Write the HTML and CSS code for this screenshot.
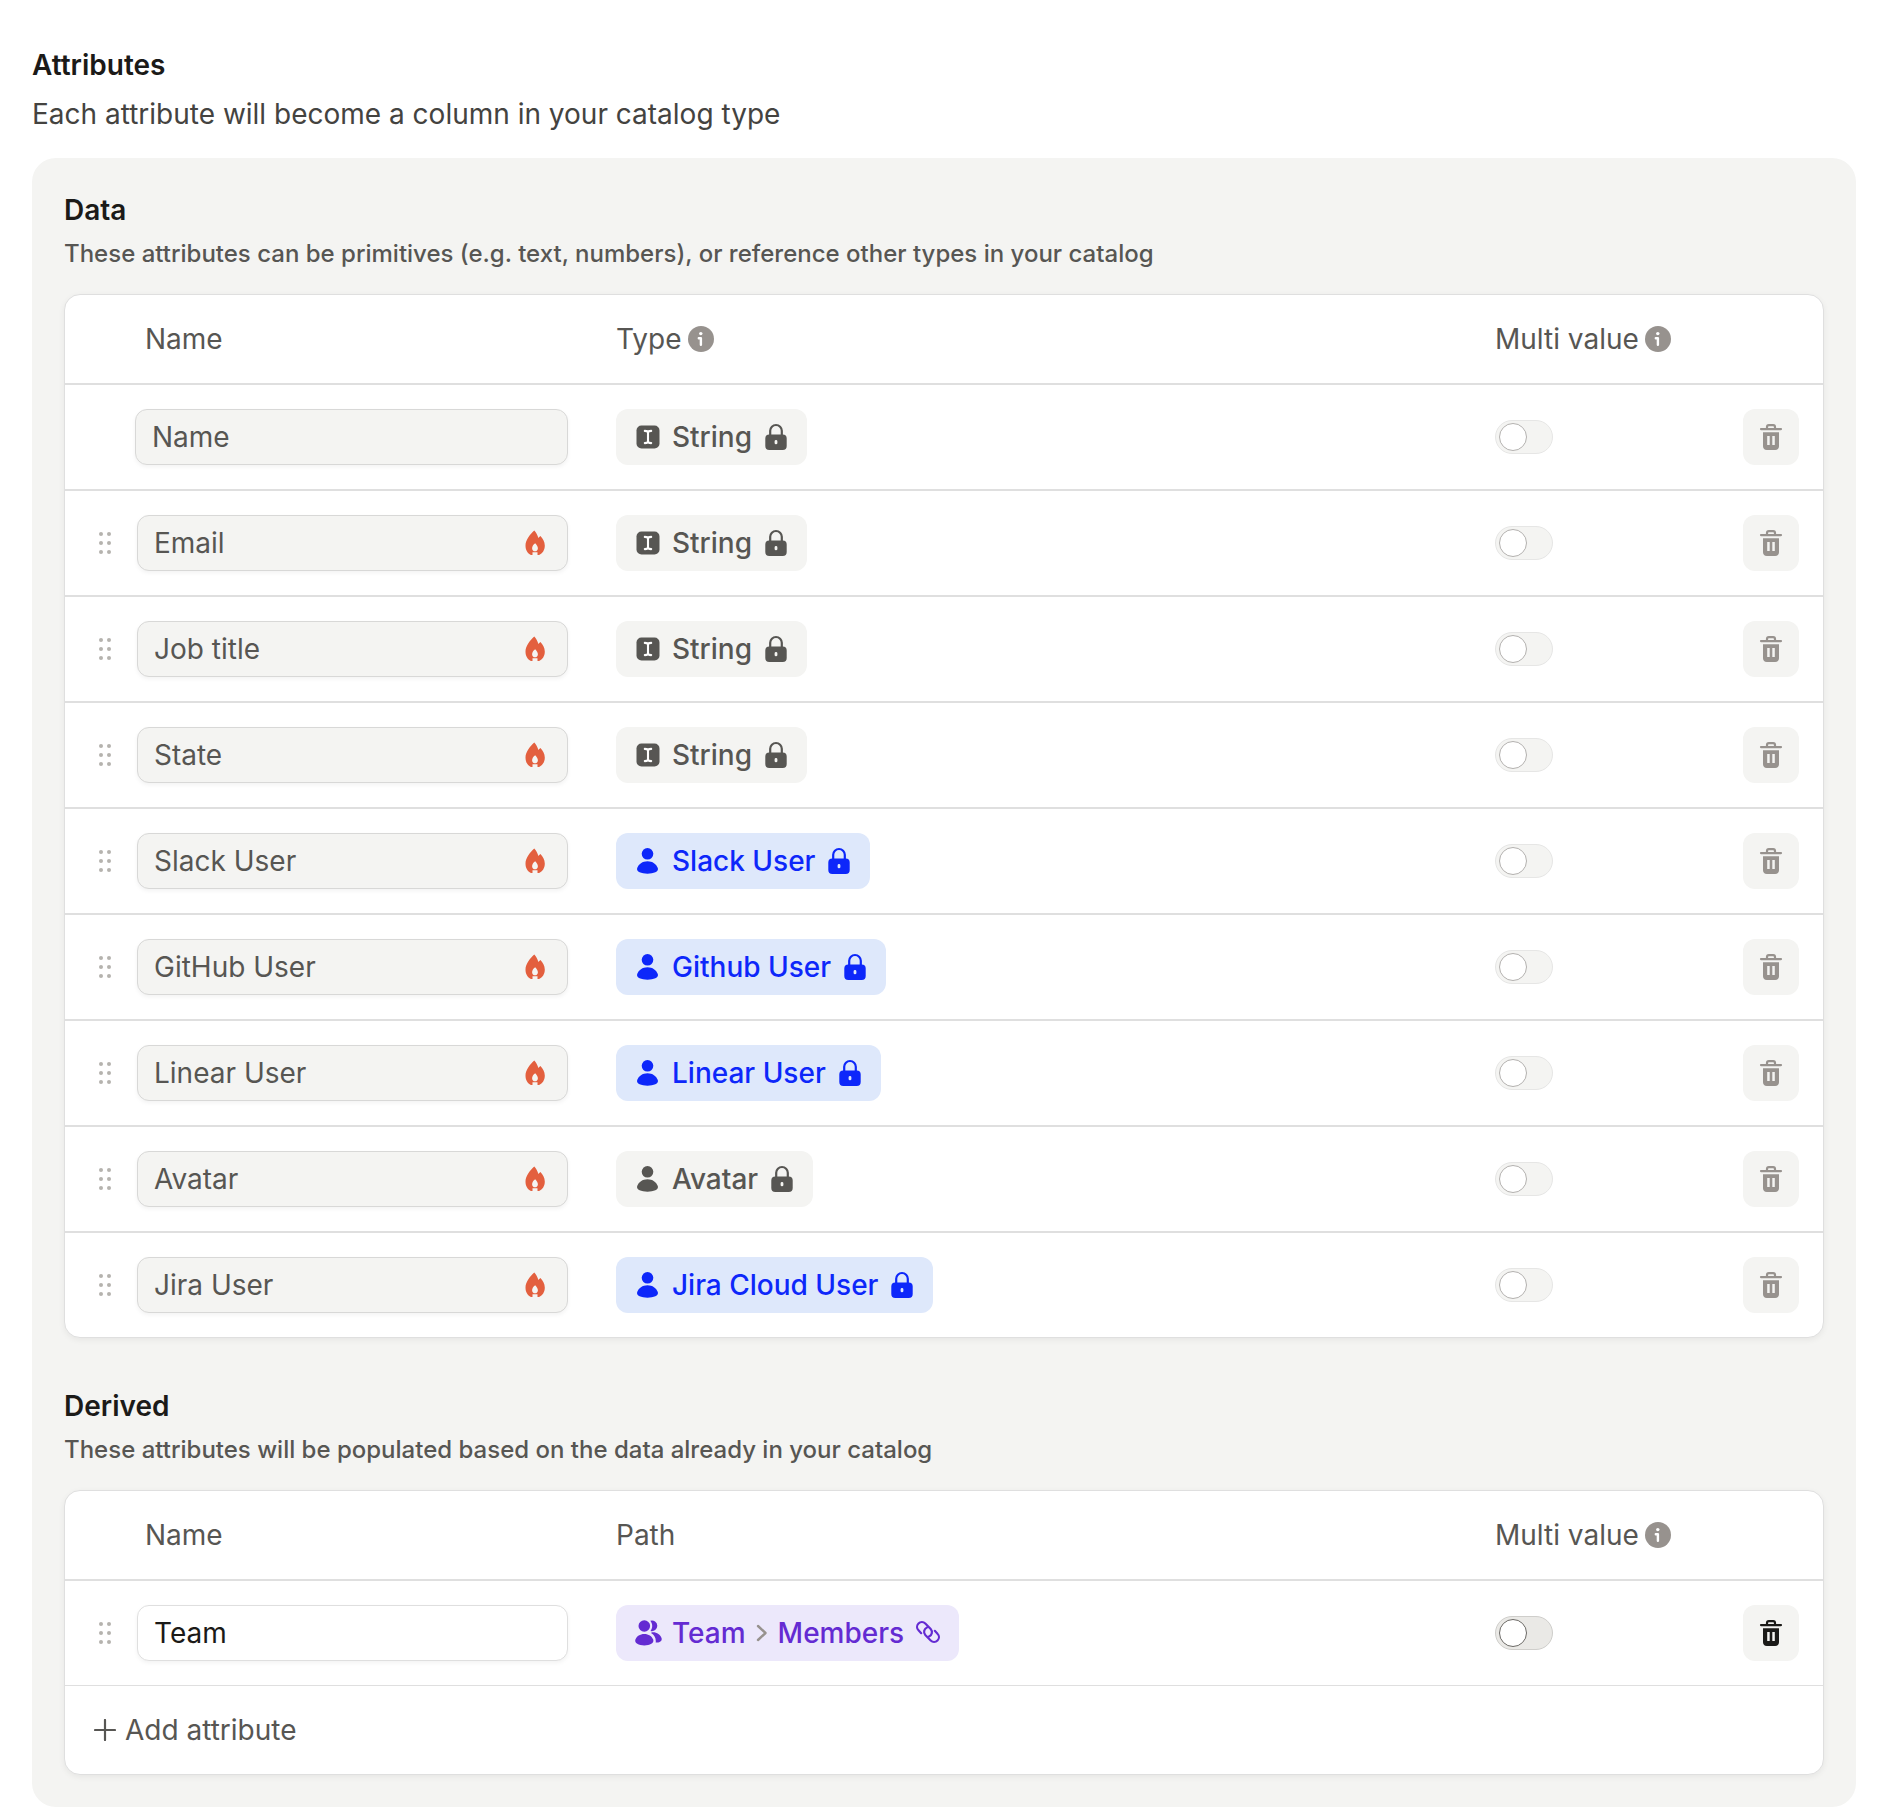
FILE: index.html
```html
<!DOCTYPE html>
<html lang="en">
<head>
    <meta charset="UTF-8">
    <meta name="viewport" content="width=device-width, initial-scale=1.0">
    <title>Attributes</title>
    <link rel="stylesheet" href="styles.css">
</head>
<body>
    <!-- icon sprite -->
    <svg class="sprite" aria-hidden="true">
        <symbol id="info" viewBox="0 0 26 26">
            <circle cx="13" cy="13" r="13" fill="currentColor"/>
            <circle cx="12.8" cy="7.6" r="1.7" fill="#fff"/>
            <path d="M10.8 12.2h2.1v6.6" fill="none" stroke="#fff" stroke-width="2.4" stroke-linecap="round" stroke-linejoin="round"/>
        </symbol>
        <symbol id="text" viewBox="0 0 28 28">
            <rect x="2.5" y="2.5" width="23" height="23" rx="5" fill="currentColor"/>
            <path d="M10.8 7.9c1.7 0 3.2.3 3.2 1.8 0-1.5 1.5-1.8 3.2-1.8M10.8 20.1c1.7 0 3.2-.3 3.2-1.8 0 1.5 1.5 1.8 3.2 1.8M14 9.5v9" fill="none" stroke="#fff" stroke-width="2.1" stroke-linecap="round"/>
        </symbol>
        <symbol id="user" viewBox="0 0 28 28">
            <circle cx="13.5" cy="6.8" r="5.8" fill="currentColor"/>
            <path d="M13.5 14.2c5 0 8.9 2.8 10.3 6.9 1.3 3.7-4.3 5.6-10.3 5.6S1.9 24.8 3.2 21.1c1.4-4.1 5.3-6.9 10.3-6.9z" fill="currentColor"/>
        </symbol>
        <symbol id="users" viewBox="0 0 28 28">
            <circle cx="10.3" cy="7" r="5.8" fill="currentColor"/>
            <path d="M10.3 15c4.300 0 7.600 2.200 8.900 5.600 1.300 3.900-3.400 5.800-8.900 5.800s-10.200-1.900-8.900-5.800c1.300-3.400 4.600-5.600 8.900-5.600z" fill="currentColor"/>
            <path d="M16.300 1.800a5.300 5.300 0 1 1 .2 10.100c2.400-3 2.200-7.200-.2-10.100z" fill="currentColor"/>
            <path d="M17.600 13.400c4.900-.6 8.700 2.200 9.900 5.600 1 3-1.700 4.500-5.800 4.600.5-4.400-1-7.600-4.700-9.700z" fill="currentColor"/>
        </symbol>
        <symbol id="lock" viewBox="0 0 28 28">
            <path d="M8.200 13V7.800a5.800 5.800 0 0 1 11.600 0V13" fill="none" stroke="currentColor" stroke-width="2.2"/>
            <path fill-rule="evenodd" d="M7.300 11.500h13.400a4 4 0 0 1 4 4V23a4 4 0 0 1-4 4H7.300a4 4 0 0 1-4-4v-7.500a4 4 0 0 1 4-4zM14 17a1.400 1.400 0 0 0-1.400 1.400v1.500a1.400 1.400 0 0 0 2.800 0v-1.500A1.400 1.400 0 0 0 14 17z" fill="currentColor"/>
        </symbol>
        <symbol id="flame" viewBox="0 0 28 28">
            <path fill-rule="evenodd" d="M13.300 1.600c1.700 1.700 3.100 4.400 4.100 7.500.5-.8 1.200-1.600 2-2.200 2.300 2.200 4.400 5.800 4.400 9.500 0 4.500-2.300 8-5.700 9.500h-1.600v-2.700h-5v2.700H9.900c-3.400-1.500-5.400-4.900-5.400-9.400 0-5.200 4.400-10.900 8.800-14.900zM14.200 14.200c-1.900 1.300-3.100 3.200-3.100 5 0 1.900 1.300 3.100 2.900 3.100s2.900-1.200 2.900-3.100c0-1.700-1.200-3.600-2.700-5z" fill="currentColor"/>
        </symbol>
        <symbol id="trash" viewBox="0 0 28 28">
            <path d="M4 6.100h20M10 6V3.900c0-1.100.7-1.800 1.800-1.800h4.400c1.100 0 1.800.7 1.800 1.800V6" fill="none" stroke="currentColor" stroke-width="2.2" stroke-linecap="round"/>
            <path fill-rule="evenodd" d="M6 9.200h16v14c0 2.300-1.500 3.800-3.800 3.800H9.800C7.500 27 6 25.500 6 23.200zM10.200 13v9h2.500v-9zM15.300 13v9h2.500v-9z" fill="currentColor"/>
        </symbol>
        <symbol id="link" viewBox="0 0 28 28">
            <g fill="none" stroke="currentColor" stroke-width="2.2" stroke-linecap="round">
                <path d="M7.200 14.200 4.500 11.300a4.800 4.800 0 0 1 6.800-6.800l5.400 5.400a4.800 4.800 0 0 1-1.700 7.600"/>
                <path d="M20.800 11.800l2.700 2.900a4.800 4.800 0 0 1-6.800 6.800l-5.400-5.400a4.800 4.800 0 0 1 1.700-7.600"/>
            </g>
        </symbol>
        <symbol id="chevron" viewBox="0 0 12 18">
            <path d="M2 2l7.500 7L2 16" fill="none" stroke="currentColor" stroke-width="2.4" stroke-linecap="round" stroke-linejoin="round"/>
        </symbol>
        <symbol id="grip" viewBox="0 0 14 24">
            <g fill="currentColor">
                <circle cx="3" cy="3" r="2"/><circle cx="11" cy="3" r="2"/>
                <circle cx="3" cy="12" r="2"/><circle cx="11" cy="12" r="2"/>
                <circle cx="3" cy="21" r="2"/><circle cx="11" cy="21" r="2"/>
            </g>
        </symbol>
        <symbol id="plus" viewBox="0 0 22 22">
            <path d="M11 1v20M1 11h20" fill="none" stroke="currentColor" stroke-width="2.2" stroke-linecap="round"/>
        </symbol>
    </svg>

    <h1>Attributes</h1>
    <p class="intro">Each attribute will become a column in your catalog type</p>

    <div class="panel">
        <section>
            <h2>Data</h2>
            <p class="hint">These attributes can be primitives (e.g. text, numbers), or reference other types in your catalog</p>
            <div class="card">
                <table>
                    <colgroup><col class="col-name"><col><col class="col-multi"><col class="col-delete"></colgroup>
                    <thead>
                        <tr>
                            <th class="name-head">Name</th>
                            <th><span class="head">Type <svg class="info"><use href="#info"/></svg></span></th>
                            <th><span class="head">Multi value <svg class="info"><use href="#info"/></svg></span></th>
                            <th></th>
                        </tr>
                    </thead>
                    <tbody id="dataRows"></tbody>
                </table>
            </div>
        </section>
        <section>
            <h2>Derived</h2>
            <p class="hint">These attributes will be populated based on the data already in your catalog</p>
            <div class="card">
                <table>
                    <colgroup><col class="col-name"><col><col class="col-multi"><col class="col-delete"></colgroup>
                    <thead>
                        <tr>
                            <th class="name-head">Name</th>
                            <th>Path</th>
                            <th><span class="head">Multi value <svg class="info"><use href="#info"/></svg></span></th>
                            <th></th>
                        </tr>
                    </thead>
                    <tbody>
                        <tr>
                            <td>
                                <div class="name-cell">
                                    <button class="grip" aria-label="Reorder Team"><svg><use href="#grip"/></svg></button>
                                    <div class="field"><input type="text" value="Team" aria-label="Attribute name"></div>
                                </div>
                            </td>
                            <td>
                                <button class="chip purple">
                                    <svg><use href="#users"/></svg>
                                    <span class="path">Team <svg class="chevron"><use href="#chevron"/></svg> Members</span>
                                    <svg><use href="#link"/></svg>
                                </button>
                            </td>
                            <td><input type="checkbox" class="toggle" aria-label="Multi value for Team"></td>
                            <td><button class="delete" aria-label="Delete Team"><svg><use href="#trash"/></svg></button></td>
                        </tr>
                    </tbody>
                </table>
                <button class="add"><span class="plus"><svg><use href="#plus"/></svg></span>Add attribute</button>
            </div>
        </section>
    </div>

    <script>
        const attributes = [
            { name: "Name", type: "String", icon: "text", color: "grey", fixed: true },
            { name: "Email", type: "String", icon: "text", color: "grey" },
            { name: "Job title", type: "String", icon: "text", color: "grey" },
            { name: "State", type: "String", icon: "text", color: "grey" },
            { name: "Slack User", type: "Slack User", icon: "user", color: "blue" },
            { name: "GitHub User", type: "Github User", icon: "user", color: "blue" },
            { name: "Linear User", type: "Linear User", icon: "user", color: "blue" },
            { name: "Avatar", type: "Avatar", icon: "user", color: "grey" },
            { name: "Jira User", type: "Jira Cloud User", icon: "user", color: "blue" }
        ];

        // the fixed attribute can't be reordered and isn't synced, so it has no grip or flame
        function renderRow(attr) {
            const grip = attr.fixed ? "" : `<button class="grip" aria-label="Reorder ${attr.name}"><svg><use href="#grip"/></svg></button>`;
            const flame = attr.fixed ? "" : `<svg class="flame"><use href="#flame"/></svg>`;
            return `<tr>
                <td><div class="name-cell ${attr.fixed ? "fixed" : ""}">
                    ${grip}
                    <div class="field disabled"><input type="text" value="${attr.name}" aria-label="Attribute name" disabled>${flame}</div>
                </div></td>
                <td><button class="chip ${attr.color}" disabled>
                    <svg><use href="#${attr.icon}"/></svg><span>${attr.type}</span><svg><use href="#lock"/></svg>
                </button></td>
                <td><input type="checkbox" class="toggle" aria-label="Multi value for ${attr.name}" disabled></td>
                <td><button class="delete" aria-label="Delete ${attr.name}" disabled><svg><use href="#trash"/></svg></button></td>
            </tr>`;
        }

        document.getElementById("dataRows").innerHTML = attributes.map(renderRow).join("");
    </script>
</body>
</html>
```

FILE: styles.css
```css
* {
    box-sizing: border-box;
}

body {
    margin: 0;
    padding: 44px 32px 8px;
    background: #fff;
    color: #1b1a18;
    font-family: Inter, "Liberation Sans", sans-serif;
    font-size: 28px;
    line-height: 40px;
}

.sprite {
    display: none;
}

svg {
    display: block;
    width: 28px;
    height: 28px;
    flex: none;
}

h1, h2, p {
    margin: 0;
}

h1, h2 {
    font-size: 28px;
    font-weight: 600;
}

h1 {
    line-height: 42px;
    margin-bottom: 8px;
}

.intro {
    color: #444340;
    margin-bottom: 24px;
}

.hint {
    margin: 8px 0 24px;
    color: #575653;
    font-size: 24px;
    font-weight: 500;
    line-height: 32px;
}

.panel {
    display: flex;
    flex-direction: column;
    gap: 48px;
    padding: 32px;
    border-radius: 24px;
    background: #f4f4f2;
}

.card {
    overflow: hidden;
    border: 1px solid #dfdfdf;
    border-radius: 16px;
    background: #fff;
    box-shadow: 0 2px 6px rgba(0, 0, 0, 0.06);
}

/* tables */
table {
    width: 100%;
    table-layout: fixed;
    border-collapse: separate;
    border-spacing: 0;
}

.col-name {
    width: 551px;
}

.col-multi {
    width: 248px;
}

.col-delete {
    width: 80px;
}

th {
    height: 90px;
    padding: 0;
    border-bottom: 2px solid #dfdfdf;
    color: #575653;
    font-weight: 400;
    text-align: left;
}

td {
    padding: 24px 0;
    border-bottom: 2px solid #dfdfdf;
}

tbody tr:last-child td {
    border-bottom: 0;
}

.name-head {
    padding-left: 80px;
}

.head {
    display: flex;
    align-items: center;
    gap: 6px;
}

.info {
    width: 26px;
    height: 26px;
    color: #97928e;
}

/* name column */
.name-cell {
    display: flex;
    align-items: center;
    gap: 16px;
    padding: 0 48px 0 24px;
}

.name-cell.fixed {
    padding-left: 70px;
}

button {
    padding: 0;
    border: 0;
    background: none;
    color: inherit;
    font: inherit;
}

.grip {
    display: flex;
    justify-content: center;
    width: 32px;
    color: #b5b3ae;
    cursor: grab;
}

.grip svg {
    width: 14px;
    height: 24px;
}

.field {
    display: flex;
    align-items: center;
    flex: 1;
    min-width: 0;
    height: 56px;
    padding: 0 18px 0 16px;
    border: 1px solid #dfdfdf;
    border-radius: 12px;
    background: #fff;
    box-shadow: 0 2px 4px rgba(0, 0, 0, 0.05);
}

.field.disabled {
    border-color: #d8d8d7;
    background: #f4f4f2;
}

.field input {
    flex: 1;
    min-width: 0;
    padding: 0;
    border: 0;
    outline: 0;
    background: none;
    color: #1b1a18;
    font: inherit;
}

.field input:disabled {
    color: #575653;
}

.flame {
    color: #e35f3e;
}

/* type chips */
.chip {
    display: flex;
    align-items: center;
    gap: 10px;
    height: 56px;
    padding: 0 17px 0 18px;
    border-radius: 12px;
    font-weight: 500;
}

.chip.grey {
    background: #f4f4f2;
    color: #575653;
}

.chip.blue {
    background: #dee8fb;
    color: #0d27fa;
}

.chip.purple {
    background: #ece8fb;
    color: #642bd2;
}

.path {
    display: flex;
    align-items: center;
    gap: 10px;
}

.chevron {
    width: 12px;
    height: 18px;
    color: #97928e;
}

/* multi value switch */
.toggle {
    display: flex;
    align-items: center;
    appearance: none;
    width: 58px;
    height: 34px;
    margin: 0;
    padding: 0 3px;
    border: 1px solid #cfcecb;
    border-radius: 17px;
    background: #eae9e6;
}

.toggle::before {
    content: "";
    width: 26px;
    height: 26px;
    border: 1px solid #6b6965;
    border-radius: 50%;
    background: #fff;
}

.toggle:checked {
    justify-content: flex-end;
}

.toggle:disabled {
    border-color: #e6e6e5;
    background: #f4f4f2;
}

.toggle:disabled::before {
    border-color: #b3b1af;
}

.delete {
    display: flex;
    align-items: center;
    justify-content: center;
    width: 56px;
    height: 56px;
    border-radius: 12px;
    background: #f4f4f2;
    color: #1b1a18;
}

.delete:disabled {
    color: #97928e;
}

.add {
    display: flex;
    align-items: center;
    gap: 4px;
    width: 100%;
    height: 89px;
    padding: 0 24px;
    border-top: 1px solid #dfdfdf;
    color: #575653;
}

.plus {
    display: flex;
    justify-content: center;
    width: 32px;
}

.plus svg {
    width: 22px;
    height: 22px;
}
```
